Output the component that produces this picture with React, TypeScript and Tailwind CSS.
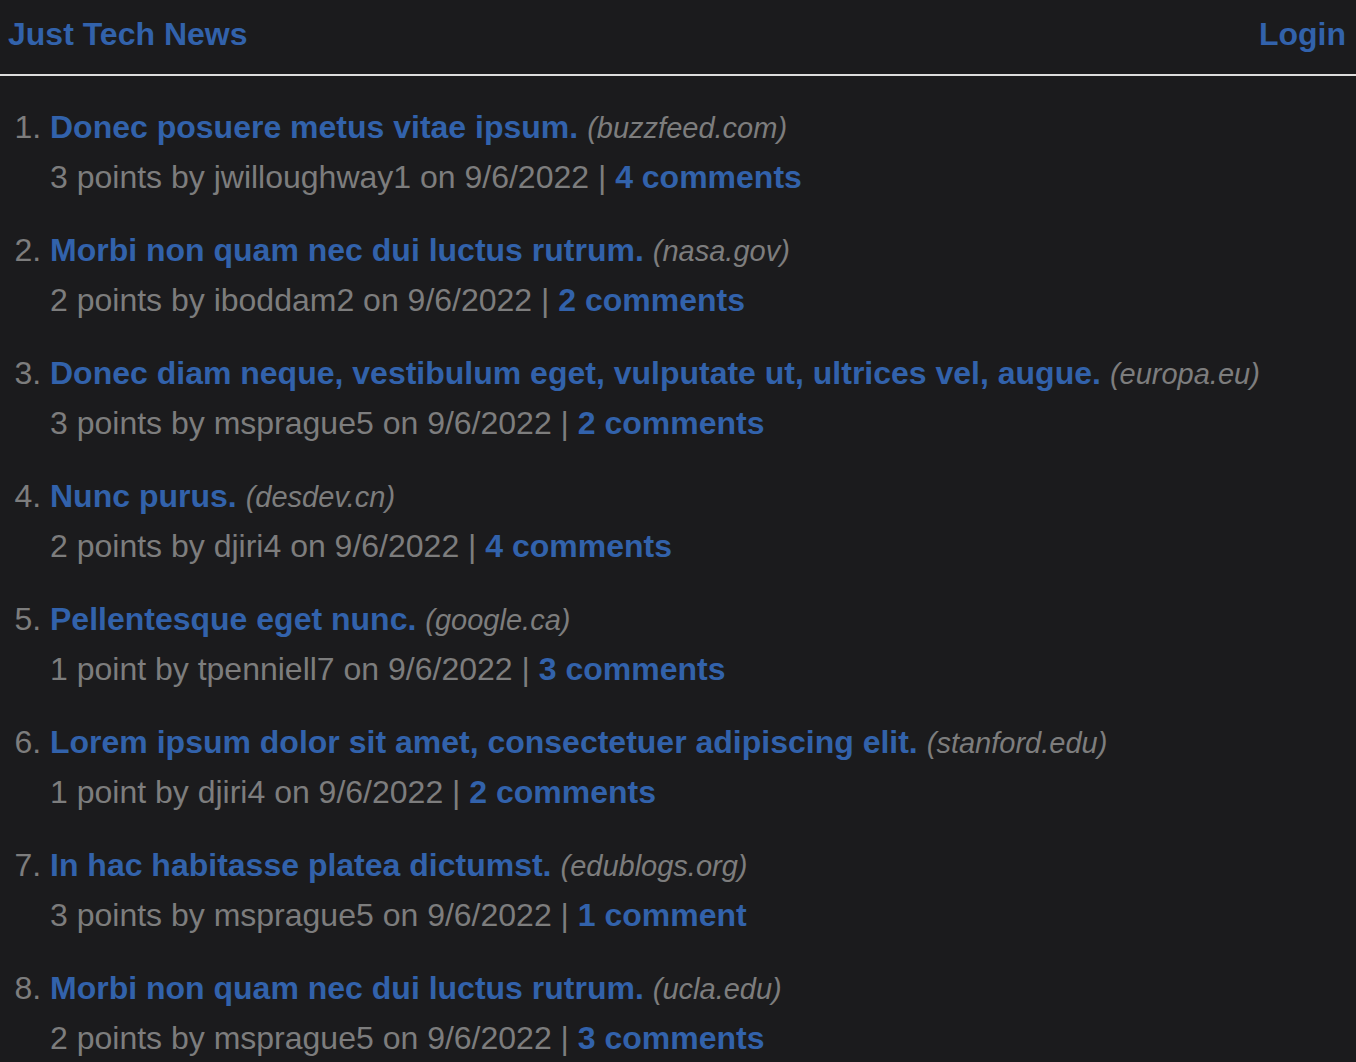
const posts = [
  { title: "Donec posuere metus vitae ipsum.", domain: "buzzfeed.com", points: 3, user: "jwilloughway1", comments: 4 },
  { title: "Morbi non quam nec dui luctus rutrum.", domain: "nasa.gov", points: 2, user: "iboddam2", comments: 2 },
  { title: "Donec diam neque, vestibulum eget, vulputate ut, ultrices vel, augue.", domain: "europa.eu", points: 3, user: "msprague5", comments: 2 },
  { title: "Nunc purus.", domain: "desdev.cn", points: 2, user: "djiri4", comments: 4 },
  { title: "Pellentesque eget nunc.", domain: "google.ca", points: 1, user: "tpenniell7", comments: 3 },
  { title: "Lorem ipsum dolor sit amet, consectetuer adipiscing elit.", domain: "stanford.edu", points: 1, user: "djiri4", comments: 2 },
  { title: "In hac habitasse platea dictumst.", domain: "edublogs.org", points: 3, user: "msprague5", comments: 1 },
  { title: "Morbi non quam nec dui luctus rutrum.", domain: "ucla.edu", points: 2, user: "msprague5", comments: 3 },
];

export default function App() {
  return (
    <div className="min-h-screen bg-[#1b1b1d] text-[#7d7d7d] font-['Liberation_Sans',Arial,sans-serif] text-[32px]">
      <header className="flex items-center justify-between pl-[8px] pr-[10px] pt-[16px] pb-[22px] border-b-2 border-[#dcdcdc]">
        <a href="#" className="font-bold text-[#3262ab] leading-[36px]">Just Tech News</a>
        <a href="#" className="font-bold text-[#3262ab] leading-[36px]">Login</a>
      </header>

      <ol className="list-decimal pl-[50px] pt-[26px]">
        {posts.map((p, i) => (
          <li key={i} className="mb-[23px] leading-[50px]">
            <div className="h-[50px]">
              <a href="#" className="font-bold text-[#3262ab]">{p.title}</a>
              <span className="ml-[9px] italic text-[29px] leading-none">({p.domain})</span>
            </div>
            <div className="h-[50px]">
              {p.points} {p.points === 1 ? "point" : "points"} by {p.user} on 9/6/2022 |{" "}
              <a href="#" className="font-bold text-[#3262ab]">
                {p.comments} {p.comments === 1 ? "comment" : "comments"}
              </a>
            </div>
          </li>
        ))}
      </ol>
    </div>
  );
}
